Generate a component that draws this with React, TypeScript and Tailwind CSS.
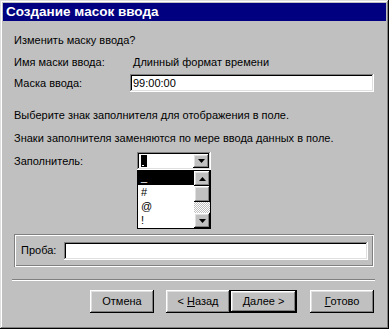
import React from "react";

const raised =
  "shadow-[inset_-1px_-1px_#000,inset_1px_1px_#fff,inset_-2px_-2px_#808080,inset_2px_2px_#dfdfdf]";
const sunken =
  "shadow-[inset_-1px_-1px_#fff,inset_1px_1px_#808080,inset_-2px_-2px_#dfdfdf,inset_2px_2px_#000]";

function Arrow({ up }: { up?: boolean }) {
  return (
    <svg width="7" height="4" viewBox="0 0 7 4" className="block">
      {up ? (
        <polygon points="3.5,0 7,4 0,4" fill="#000" />
      ) : (
        <polygon points="0,0 7,0 3.5,4" fill="#000" />
      )}
    </svg>
  );
}

function Btn({
  children,
  def,
  className = "",
}: {
  children: React.ReactNode;
  def?: boolean;
  className?: string;
}) {
  const inner = (
    <div
      className={`${raised} bg-[#c0c0c0] flex items-center justify-center h-full w-full`}
    >
      {children}
    </div>
  );
  if (def)
    return (
      <div className={`border border-black h-[23px] ${className}`}>{inner}</div>
    );
  return <div className={`h-[23px] ${className}`}>{inner}</div>;
}

export default function App() {
  return (
    <div
      className="w-[389px] h-[329px] bg-[#c0c0c0] p-[3px] shadow-[inset_-1px_-1px_#000,inset_1px_1px_#dfdfdf,inset_-2px_-2px_#808080,inset_2px_2px_#fff] text-black text-[11px] leading-[13px]"
      style={{ fontFamily: '"Liberation Sans", Arial, sans-serif' }}
    >
      <div className="h-[18px] bg-[#000080] text-white font-bold text-[13.5px] leading-[18px] pl-[3px]">
        Создание масок ввода
      </div>
      <div className="relative pl-[11px] pr-[11px] flex flex-col">
        <div className="h-[13px] mt-[13px]">Изменить маску ввода?</div>
        <div className="h-[14px] mt-[8px] flex items-center">
          <div className="w-[119px]">Имя маски ввода:</div>
          <div>Длинный формат времени</div>
        </div>
        <div className="h-[18px] mt-[5px] flex items-center">
          <div className="w-[116px]">Маска ввода:</div>
          <div
            className={`${sunken} bg-white h-[18px] w-[244px] flex items-center pl-[3px]`}
          >
            99:00:00
          </div>
        </div>
        <div className="h-[14px] mt-[16px] flex items-center">
          Выберите знак заполнителя для отображения в поле.
        </div>
        <div className="h-[14px] mt-[9px] flex items-center">
          Знаки заполнителя заменяются по мере ввода данных в поле.
        </div>
        <div className="h-[18px] mt-[7px] flex items-center">
          <div className="w-[123px]">Заполнитель:</div>
          <div
            className={`${sunken} bg-white h-[18px] w-[74px] p-[2px] flex items-center`}
          >
            <div className="flex-1 h-full flex items-center pl-[2px]">
              <div className="relative w-[6px] h-[12px] bg-black">
                <div className="absolute left-[1px] bottom-[1px] w-[2px] h-[1px] bg-white" />
              </div>
            </div>
            <div
              className={`${raised} bg-[#c0c0c0] w-[16px] h-[14px] flex items-center justify-center`}
            >
              <Arrow />
            </div>
          </div>
        </div>

        {/* dropdown list overlay */}
        <div className="absolute left-[134px] top-[149px] w-[74px] h-[59px] border border-black bg-white flex">
          <div className="flex-1 flex flex-col">
            <div className="h-[14px] bg-black text-white pl-[3px] leading-[12px]">_</div>
            <div className="h-[14px] pl-[3px] flex items-center">#</div>
            <div className="h-[14px] pl-[3px] flex items-center">@</div>
            <div className="h-[14px] pl-[3px] flex items-center">!</div>
          </div>
          <div className="w-[16px] flex flex-col">
            <div
              className={`${raised} bg-[#c0c0c0] h-[15px] flex items-center justify-center`}
            >
              <Arrow up />
            </div>
            <div className={`${raised} bg-[#c0c0c0] h-[16px]`} />
            <div className="flex-1 bg-[repeating-conic-gradient(#c0c0c0_0_25%,#fff_0_50%)] bg-[length:2px_2px]" />
            <div
              className={`${raised} bg-[#c0c0c0] h-[15px] flex items-center justify-center`}
            >
              <Arrow />
            </div>
          </div>
        </div>

        <div className="mt-[64px] h-[33px] w-[360px] shadow-[inset_1px_1px_#808080,inset_-1px_-1px_#fff,inset_2px_2px_#fff,inset_-2px_-2px_#808080] flex items-center pl-[7px]">
          <div className="w-[43px]">Проба:</div>
          <div className={`${sunken} bg-white h-[18px] w-[304px]`} />
        </div>

        <div className="mt-[12px] -ml-[2px] w-[363px] h-[2px] border-t border-t-[#808080] border-b border-b-white" />

        <div className="mt-[9px] flex">
          <div className="ml-[76px] w-[64px]">
            <Btn>Отмена</Btn>
          </div>
          <div className="ml-[12px] w-[64px]">
            <Btn>
              &lt;&nbsp;<u className="underline-offset-[1px]">Н</u>азад
            </Btn>
          </div>
          <div className="w-[67px]">
            <Btn def>
              <u className="underline-offset-[1px]">Д</u>алее &gt;
            </Btn>
          </div>
          <div className="ml-[13px] w-[64px]">
            <Btn>
              <u className="underline-offset-[1px]">Г</u>отово
            </Btn>
          </div>
        </div>
      </div>
    </div>
  );
}
